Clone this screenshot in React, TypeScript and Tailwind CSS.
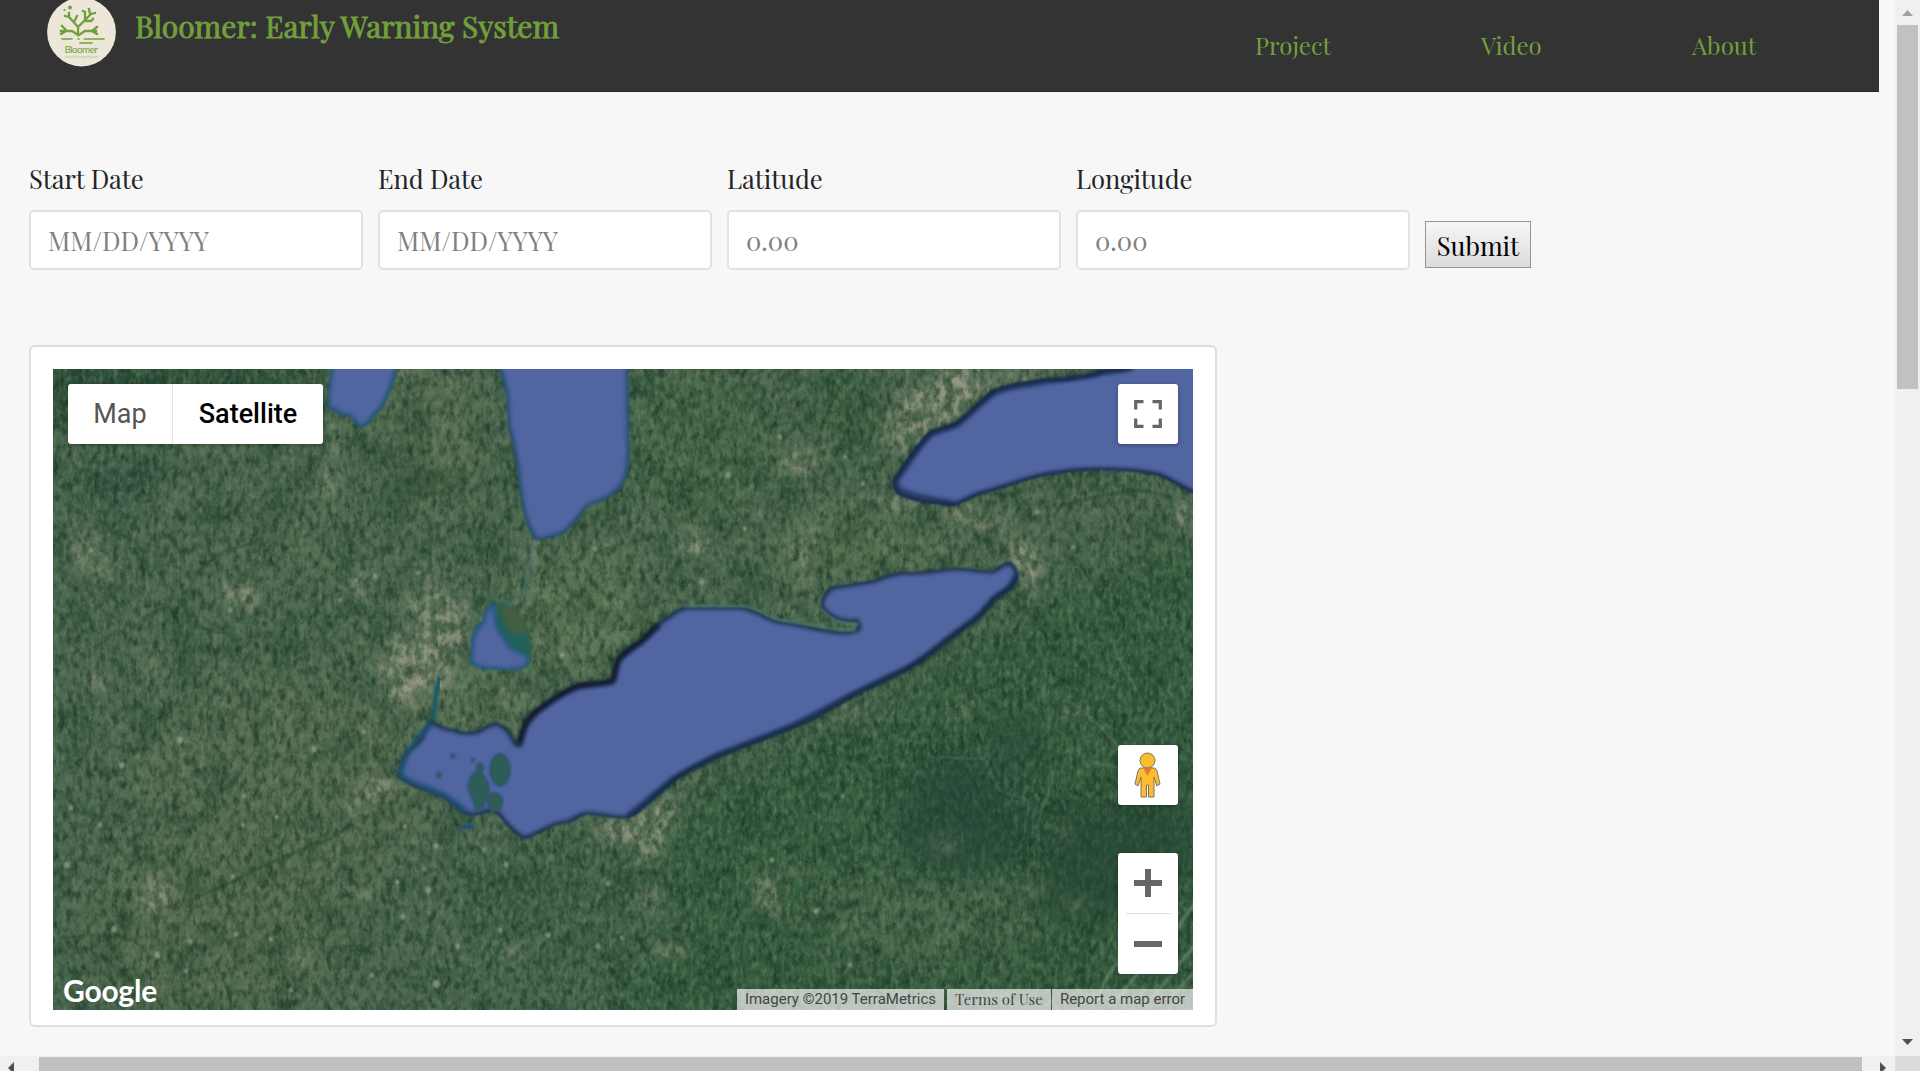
import React from "react";

const SERIF = "font-['Playfair_Display','Liberation_Serif',serif]";

const ERIE =
  "M432 722 C440 727 446 730 453 730 C460 733 466 734 473 733 C482 732 486 724 495 724 C502 725 505 727 508 731 C512 738 515 743 519 747 C521 738 522 730 526 723 C531 716 534 711 542 707 C552 700 567 689 579 685 C590 683 605 683 612 681 C616 676 613 667 620 657 C627 651 631 646 640 642 C648 637 652 627 659 623 C668 619 675 610 684 608 L743 608 C759 610 770 623 785 623 C806 625 825 633 847 633 C853 632 860 629 860 627 L856 620 C849 622 841 620 835 618 C829 615 822 611 822 605 C822 598 826 592 831 588 C844 586 857 584 870 582 C881 579 893 573 904 573 C922 575 940 569 958 569 C970 569 981 572 992 572 C998 569 1004 563 1010 563 C1015 567 1017 570 1017 575 C1017 580 1014 585 1011 588 C1004 592 997 595 992 600 C988 606 984 612 979 617 C966 626 951 636 938 647 C926 657 914 666 900 673 C884 680 869 688 854 695 C834 706 815 720 793 727 C766 738 742 747 716 757 C700 764 686 771 674 780 C662 790 651 801 640 810 C636 813 633 816 628 817 C615 818 600 814 587 813 C578 815 574 820 567 822 C552 822 538 835 524 838 C518 835 511 829 506 823 C500 816 498 811 492 809 C484 813 472 816 465 813 C455 806 447 797 436 793 C423 789 410 785 400 777 C399 769 402 760 406 753 C411 746 418 744 422 737 C424 731 427 724 432 722 Z";
const ONTARIO =
  "M1210 350 L1150 355 L1130 368 C1118 370 1108 370 1099 372 C1090 378 1080 376 1072 378 C1063 381 1052 379 1042 380 C1025 384 1006 384 992 392 C980 401 969 413 958 422 C950 428 940 428 931 432 C918 443 905 465 894 480 C893 488 896 492 900 494 C916 502 937 502 954 505 C964 501 974 495 984 492 C1010 486 1034 474 1061 472 C1088 467 1132 469 1157 474 C1172 479 1182 490 1210 498 Z";
const HURON =
  "M490 350 C501 370 504 379 506 390 C510 402 507 417 510 430 C515 444 516 459 519 473 C520 486 521 498 524 510 C526 522 531 530 535 539 C544 538 554 537 563 533 C569 528 574 522 579 517 C582 512 585 507 589 505 C595 501 602 501 608 497 C616 493 621 487 624 480 C629 466 629 453 628 440 L627 350 Z";
const SAGINAW =
  "M334 350 C331 380 327 395 329 408 L336 410 L341 415 L347 414 C353 417 357 425 361 428 C369 424 374 414 381 408 C387 399 390 388 393 381 L400 350 Z";
const ST_CLAIR =
  "M493 603 C487 607 484 612 484 620 C482 627 473 629 473 638 L471 661 C475 669 488 668 500 669 C510 669 520 670 526 666 C531 661 529 655 522 653 C513 650 507 645 504 637 C499 632 496 627 496 619 Z";

const lakes: [string, string][] = [
  [ERIE, "#152d45"],
  [ONTARIO, "#0f2340"],
  [HURON, "#204d68"],
  [SAGINAW, "#22546c"],
  [ST_CLAIR, "#1f5a78"],
];

// cx, cy, rx, ry, strength
const cities: number[][] = [
  [87, 555, 16, 22, 0.7], [102, 575, 12, 14, 0.6], [240, 596, 22, 15, 0.8], [360, 585, 10, 20, 0.6],
  [418, 605, 22, 14, 0.6], [415, 665, 36, 34, 0.9], [450, 625, 22, 34, 0.7], [405, 690, 20, 22, 0.7],
  [326, 483, 14, 18, 0.7], [333, 451, 12, 8, 0.7], [175, 500, 16, 18, 0.4], [150, 670, 10, 8, 0.7],
  [98, 680, 14, 14, 0.7], [930, 405, 34, 24, 0.9], [957, 385, 26, 24, 1], [905, 430, 22, 26, 0.8],
  [1010, 378, 34, 7, 0.8], [893, 503, 24, 8, 1], [800, 463, 20, 15, 0.8], [828, 442, 10, 9, 0.7],
  [695, 544, 14, 15, 0.9], [764, 519, 7, 6, 0.9], [829, 513, 10, 8, 0.6], [805, 555, 14, 34, 0.6],
  [1025, 558, 14, 22, 1], [1033, 578, 8, 16, 0.8], [990, 523, 30, 7, 0.8], [1183, 515, 10, 12, 0.9],
  [960, 512, 22, 7, 0.8], [378, 788, 15, 15, 1], [352, 805, 14, 12, 0.7], [157, 893, 14, 20, 0.9],
  [150, 905, 12, 10, 0.7], [365, 899, 8, 9, 0.7], [300, 958, 12, 9, 0.8], [515, 950, 14, 10, 0.6],
  [628, 830, 34, 13, 1], [655, 822, 16, 22, 1], [650, 850, 14, 18, 0.7], [650, 900, 12, 12, 0.8],
  [670, 950, 18, 9, 0.8], [765, 890, 14, 20, 0.7], [773, 905, 8, 14, 0.8], [795, 870, 8, 8, 0.7],
  [848, 713, 12, 7, 1], [965, 710, 10, 5, 0.8], [1072, 712, 16, 5, 0.8], [945, 842, 18, 12, 0.4],
  [1062, 832, 8, 8, 0.7], [1035, 887, 8, 6, 0.7], [1075, 905, 12, 8, 0.5], [535, 552, 10, 13, 0.9],
  [498, 833, 12, 8, 0.7], [690, 777, 30, 6, 0.5], [760, 750, 16, 5, 0.7], [660, 808, 22, 10, 0.8],
  [330, 430, 12, 12, 0.4], [200, 440, 24, 14, 0.3], [438, 640, 20, 60, 0.5], [380, 660, 24, 8, 0.5],
  [420, 570, 14, 12, 0.5], [560, 650, 10, 6, 0.5],
];

const rivers = [
  "M190 590 C194 572 205 563 224 552 L256 542",
  "M190 620 C205 633 220 632 240 636",
  "M55 960 C72 972 85 982 92 996",
  "M60 938 C92 936 110 930 138 943",
  "M190 900 C230 885 250 870 290 855 C310 845 330 842 350 825",
  "M262 858 C270 880 280 888 290 895",
  "M540 550 C524 575 522 590 521 610",
  "M505 470 C512 520 505 570 512 600",
  "M1060 505 C1100 500 1130 480 1170 498",
];

const brooks = [
  "M1065 700 C1090 712 1102 730 1118 745 L1132 772", "M940 757 L984 759 C990 745 976 735 982 725",
  "M984 759 C992 772 994 785 1002 792 L1030 800", "M1048 690 C1052 725 1046 740 1050 760 L1048 800",
  "M1110 640 C1128 680 1146 700 1148 720", "M1040 650 C1052 680 1040 690 1046 705",
  "M1170 610 C1178 640 1188 660 1190 690", "M820 950 C832 975 828 985 836 1010",
  "M1036 838 C1038 815 1044 800 1050 790", "M1092 762 L1120 768", "M890 960 C900 980 894 995 905 1010",
];

const townDots: number[][] = [
  [230, 610, 3], [375, 576, 3], [356, 580, 2.5], [418, 573, 3], [340, 600, 2.5], [562, 655, 3.5], [595, 549, 3],
  [607, 545, 2.5], [71, 808, 3], [67, 865, 4], [100, 825, 3], [243, 825, 3], [244, 796, 2.5], [277, 817, 3],
  [405, 826, 3], [436, 846, 3.5], [424, 869, 2.5], [484, 849, 2.5], [506, 865, 3], [397, 882, 3], [428, 890, 4],
  [403, 917, 3.5], [190, 941, 3], [236, 934, 3.5], [271, 939, 3], [372, 975, 3], [291, 990, 3], [436, 984, 5],
  [186, 971, 3], [157, 955, 4], [114, 929, 4], [500, 930, 3], [548, 935, 3.5], [598, 946, 3], [458, 946, 3.5],
  [622, 938, 3], [608, 884, 3], [180, 740, 4], [314, 749, 3.5], [122, 765, 4], [364, 732, 3], [405, 688, 5],
  [233, 877, 3], [740, 700, 2.5], [745, 529, 3], [863, 484, 3], [845, 457, 2.5], [728, 475, 4], [780, 437, 3],
  [702, 582, 3.5], [1073, 547, 2.5], [1037, 512, 3], [843, 796, 3], [772, 860, 3], [816, 911, 3.5], [850, 965, 3],
];

function MapImage() {
  return (
    <svg className="block h-full w-full" viewBox="53 369 1140 641" preserveAspectRatio="none">
      <defs>
        <filter id="soft30" x="-50%" y="-50%" width="200%" height="200%"><feGaussianBlur stdDeviation="22" /></filter>
        <filter id="soft9" x="-80%" y="-80%" width="260%" height="260%"><feGaussianBlur stdDeviation="9" /></filter>
        <filter id="soft6" x="-80%" y="-80%" width="260%" height="260%"><feGaussianBlur stdDeviation="7" /></filter>
        <filter id="soft2" x="-10%" y="-10%" width="120%" height="120%"><feGaussianBlur stdDeviation="2" /></filter>
        <filter id="soft1" x="-10%" y="-10%" width="120%" height="120%"><feGaussianBlur stdDeviation="0.9" /></filter>
        <filter id="water" x="-5%" y="-5%" width="110%" height="110%">
          <feMorphology operator="erode" radius="2" />
          <feGaussianBlur stdDeviation="1.9" />
        </filter>
        <filter id="darkGrain" x="0" y="0" width="100%" height="100%" colorInterpolationFilters="sRGB">
          <feTurbulence type="fractalNoise" baseFrequency="0.15 0.09" numOctaves="5" seed="7" />
          <feColorMatrix values="0 0 0 0 0.09  0 0 0 0 0.2  0 0 0 0 0.14  2.6 0 0 0 -1.05" />
        </filter>
        <filter id="darkPatch" x="0" y="0" width="100%" height="100%" colorInterpolationFilters="sRGB">
          <feTurbulence type="fractalNoise" baseFrequency="0.03" numOctaves="5" seed="22" />
          <feColorMatrix values="0 0 0 0 0.11  0 0 0 0 0.26  0 0 0 0 0.17  3.6 0 0 0 -1.65" />
        </filter>
        <filter id="lightGrain" x="0" y="0" width="100%" height="100%" colorInterpolationFilters="sRGB">
          <feTurbulence type="fractalNoise" baseFrequency="0.22 0.13" numOctaves="4" seed="41" />
          <feColorMatrix values="0 0 0 0 0.5  0 0 0 0 0.56  0 0 0 0 0.43  0 2 0 0 -0.82" />
        </filter>
        <filter id="cityGrain" x="0" y="0" width="100%" height="100%" colorInterpolationFilters="sRGB">
          <feTurbulence type="fractalNoise" baseFrequency="0.13 0.09" numOctaves="5" seed="5" />
          <feColorMatrix values="0 0 0 0 0.66  0 0 0 0 0.65  0 0 0 0 0.57  0 0 3.2 0 -1.3" />
        </filter>
        <mask id="cityMask" maskUnits="userSpaceOnUse" x="53" y="369" width="1140" height="641">
          <g filter="url(#soft6)">
            {cities.map(([cx, cy, rx, ry, o], i) => (
              <ellipse key={i} cx={cx} cy={cy} rx={rx} ry={ry} fill="#fff" opacity={o} />
            ))}
          </g>
        </mask>
      </defs>

      <rect x="53" y="369" width="1140" height="641" fill="#4b6850" />
      <g filter="url(#soft30)">
        <path d="M600 1040 L640 830 L760 760 L900 690 L1040 600 L1240 520 L1240 1040 Z" fill="#365d40" />
        <path d="M20 350 H300 V390 L90 420 L20 420 Z" fill="#2b5037" />
        <ellipse cx="125" cy="480" rx="50" ry="34" fill="#3a5c48" />
        <ellipse cx="440" cy="430" rx="36" ry="80" fill="#5d7155" />
        <ellipse cx="270" cy="540" rx="90" ry="40" fill="#526c53" />
        <ellipse cx="280" cy="790" rx="150" ry="120" fill="#576d52" />
        <ellipse cx="210" cy="930" rx="130" ry="90" fill="#536b50" />
        <ellipse cx="480" cy="695" rx="60" ry="22" fill="#6a8060" />
        <ellipse cx="580" cy="610" rx="70" ry="55" fill="#5f7859" />
        <ellipse cx="570" cy="910" rx="110" ry="80" fill="#406449" />
        <ellipse cx="700" cy="440" rx="70" ry="80" fill="#466948" />
        <ellipse cx="850" cy="410" rx="30" ry="50" fill="#345b3d" />
        <ellipse cx="970" cy="800" rx="70" ry="62" fill="#2c4f3d" />
        <ellipse cx="1110" cy="850" rx="90" ry="60" fill="#2b5039" />
        <ellipse cx="860" cy="550" rx="90" ry="30" fill="#54714f" />
        <ellipse cx="920" cy="920" rx="120" ry="40" fill="#4a6b4d" />
      </g>
      <rect x="53" y="369" width="1140" height="641" filter="url(#darkPatch)" opacity="0.42" />
      <rect x="53" y="369" width="1140" height="641" filter="url(#darkGrain)" opacity="0.65" />
      <rect x="53" y="369" width="1140" height="641" filter="url(#lightGrain)" opacity="0.5" />
      <g filter="url(#soft9)" opacity="0.5">
        <path d="M925 770 L965 755 L1000 785 L1020 830 L1010 870 L945 880 L900 850 L898 815 Z" fill="#284a39" />
        <path d="M990 715 H1048 V735 L1020 770 L1000 760 Z" fill="#264c38" />
        <path d="M1040 910 L1060 810 L1193 800 V870 L1110 920 L1060 930 Z" fill="#264a36" />
        <path d="M332 815 L348 792 L360 800 L340 830 Z M258 530 L272 500 L285 505 L268 540 Z M380 500 L400 470 L430 455 L425 490 L395 510 Z" fill="#23452f" />
      </g>
      <g fill="none" stroke="#1f4229" strokeWidth="2" opacity="0.6" filter="url(#soft1)">
        {rivers.map((d) => <path key={d} d={d} />)}
      </g>
      <g fill="none" stroke="#76907a" strokeWidth="1.3" opacity="0.5" filter="url(#soft1)">
        {brooks.map((d) => <path key={d} d={d} />)}
      </g>
      <path d="M1098 1000 C1106 970 1120 960 1136 948 M1116 1002 C1140 965 1175 940 1196 900 M1150 1000 C1165 985 1180 960 1196 945 M1168 1000 L1196 970 M1178 925 L1196 902" fill="none" stroke="#7f9a80" strokeWidth="3" opacity="0.5" filter="url(#soft1)" />
      <rect x="53" y="369" width="1140" height="641" fill="#85846f" mask="url(#cityMask)" opacity="0.2" />
      <rect x="53" y="369" width="1140" height="641" filter="url(#cityGrain)" mask="url(#cityMask)" opacity="0.75" />
      <g fill="#a7b09a" opacity="0.65" filter="url(#soft1)">
        {townDots.map(([x, y, r], i) => <ellipse key={i} cx={x} cy={y} rx={r * 0.7} ry={r * 0.8} />)}
      </g>

      <path d="M538 538 C528 565 526 580 522 602" fill="none" stroke="#50736f" strokeWidth="2.5" filter="url(#soft1)" />
      <path d="M497 603 C512 598 518 620 527 632 C534 645 530 656 524 655 C508 650 499 632 495 620 Z" fill="#22615a" filter="url(#soft2)" />
      <path d="M500 606 C512 602 528 618 526 632 C514 640 503 628 500 606 Z" fill="#435f40" filter="url(#soft2)" />
      <path d="M439 677 C438 690 434 698 435 708 L430 728" fill="none" stroke="#1b5a64" strokeWidth="5" filter="url(#soft1)" />

      <g strokeLinejoin="round" filter="url(#soft1)">
        {lakes.map(([d, shore]) => <path key={d} d={d} fill={shore} stroke={shore} strokeWidth="2.5" />)}
      </g>
      {lakes.map(([d]) => <path key={d} d={d} fill="#5165a1" stroke="#5165a1" strokeWidth="1.5" filter="url(#water)" />)}

      <g fill="none" strokeLinejoin="round" filter="url(#soft2)">
        <path d="M519 744 C521 738 522 730 526 723 C534 711 560 692 579 686 C590 684 605 684 612 681 C616 676 613 667 620 657 L640 642 L659 625" stroke="#0a1626" strokeWidth="5" />
        <path d="M1130 368 L1099 373 L1042 382 C1025 386 1006 386 992 394 L958 424 L931 434 C919 445 906 467 896 480 C895 490 900 494 954 503" stroke="#0f2342" strokeWidth="4" opacity="0.8" />
        <path d="M1016 575 C1013 590 997 595 979 616 C951 639 920 664 900 672 L854 694 L793 726 L716 756 L674 779 L628 816" stroke="#102642" strokeWidth="4" />
        <path d="M432 723 C406 745 400 769 401 777 C423 788 440 789 466 812" stroke="#1d5472" strokeWidth="4" />
      </g>
      <path d="M684 606 H743 C759 607 770 620 785 621 L812 625 C825 627 840 631 854 630 L857 624 C842 624 828 619 821 608" fill="none" stroke="#48796f" strokeWidth="2.2" filter="url(#soft1)" />

      <g fill="#2f5c57" stroke="#2d5472" strokeWidth="1.5" filter="url(#soft1)">
        <ellipse cx="500" cy="770" rx="10" ry="16" />
        <path d="M468 787 C468 777 474 771 480 772 C487 777 490 785 489 792 C488 800 484 800 483 808 L476 812 C476 801 469 797 468 787 Z" />
        <ellipse cx="495" cy="802" rx="7.5" ry="9.5" />
        <ellipse cx="480" cy="768" rx="3.5" ry="5" />
        <circle cx="453" cy="756" r="2" />
        <circle cx="473" cy="760" r="1.6" />
        <ellipse cx="439" cy="775" rx="2" ry="3" />
        <path d="M460 826 L474 823 L472 828 L462 829 Z" fill="#1f4f66" />
      </g>
    </svg>
  );
}

function Logo() {
  return (
    <svg className="h-[70px] w-[70px]" viewBox="0 0 70 70">
      <circle cx="35.500" cy="35" r="34.400" fill="#ede7da" />
      <g fill="none" stroke="#719f3b" strokeWidth="2.3" strokeLinecap="square">
        <path d="M32 38 V30 M32 38 L26 34 H15 M20 33 L16 29 M20 34 L15 37 M33 38 L39 34 H50 M46 34 L51 30 M46 34 L51 37 M32 30 L23 20 M23 20 L19 19 M23 20 V16 M28 25 L31 19 M32 30 L45 17 M39 23 L39 15 M45 17 L49 16 M44 17 L43 12 M39 15 L37 14 M40 24 H45 L47 22" />
        <path d="M16 42 H26 M32 42 H33 M38.500 42 H58 M34 46 H46" strokeWidth="1.3" />
      </g>
      <circle cx="24" cy="10.500" r="2" fill="#719f3b" />
      <circle cx="18.500" cy="13" r="1" fill="#719f3b" />
      <text x="18.500" y="56" textLength="33.500" fontSize="10" fill="#719f3b" fontFamily="Lato, sans-serif">Bloomer</text>
      <text x="19" y="61" textLength="33" fontSize="3.800" fill="#b3c592" fontFamily="Lato, sans-serif">Early Warning System</text>
    </svg>
  );
}

function Field({ label, placeholder }: { label: string; placeholder: string }) {
  return (
    <label className="flex w-[334px] flex-col">
      <span className="mt-[-6px] h-[51px] text-[25.6px] leading-[38px] tracking-[-0.05px] text-[#212529]">{label}</span>
      <span className="flex h-[60px] items-center overflow-hidden rounded-[5px] border-2 border-[#e2e2e2] bg-white pl-[17px]">
        <input className="w-[290px] pb-px text-[25.6px] leading-[36px] outline-none placeholder:text-[#808080]" placeholder={placeholder} />
      </span>
    </label>
  );
}

function MapControls() {
  return (
    <>
      <div className="absolute left-[15px] top-[15px] flex h-[60px] w-[255px] items-center overflow-hidden rounded-[3px] bg-white font-[Roboto,sans-serif] text-[27px] shadow-[0_1px_4px_rgba(0,0,0,0.3)]">
        <div className="flex h-full w-[105px] items-center justify-center border-r border-[#e6e6e6] text-[#565656]">Map</div>
        <div className="flex h-full flex-1 items-center justify-center font-medium text-black">Satellite</div>
      </div>
      <div className="absolute right-[15px] top-[15px] flex h-[60px] w-[60px] items-center justify-center rounded-[3px] bg-white shadow-[0_1px_4px_rgba(0,0,0,0.3)]">
        <svg className="h-7 w-7" viewBox="0 0 28 28" fill="none" stroke="#666" strokeWidth="3.2">
          <path d="M1.700 9.500 V1.700 H9.500 M18.500 1.700 H26.300 V9.500 M26.300 18.500 V26.300 H18.500 M9.500 26.300 H1.700 V18.500" />
        </svg>
      </div>
      <div className="absolute right-[15px] top-[376px] flex h-[60px] w-[60px] justify-center rounded-[3px] bg-white pt-[7px] shadow-[0_1px_4px_rgba(0,0,0,0.3)]">
        <svg className="h-[46px] w-[28px]" viewBox="0 0 28 46" fill="#fbbc2d" stroke="#7a7369" strokeWidth="1">
          <path d="M7 16 H20 Q22 16 23 19 L26 32 L23 34 L20 25 V45 H14.500 V33 H12.500 V45 H7 V25 L4 34 L1 32 L4 19 Q5 16 7 16 Z" />
          <path d="M9 15.500 H18 L13.500 24 Z" fill="#e27b32" stroke="none" />
          <circle cx="13.500" cy="8.500" r="7.500" />
        </svg>
      </div>
      <div className="absolute right-[15px] top-[484px] flex h-[121px] w-[60px] flex-col items-center rounded-[3px] bg-white shadow-[0_1px_4px_rgba(0,0,0,0.3)]">
        <div className="flex h-[60px] items-center">
          <svg className="h-7 w-7" viewBox="0 0 28 28" fill="#666"><path d="M0 11 H11 V0 H17 V11 H28 V17 H17 V28 H11 V17 H0 Z" /></svg>
        </div>
        <div className="h-px w-[45px] bg-[#e2e2e2]" />
        <div className="flex h-[60px] items-center">
          <div className="h-1.5 w-7 bg-[#666]" />
        </div>
      </div>
      <div className="absolute bottom-[2px] left-[10px] font-[Lato,sans-serif] text-[30px] font-bold leading-[36px] tracking-[-0.2px] text-white">Google</div>
      <div className="absolute bottom-0 right-0 flex h-[21px] text-[15px] leading-[20px] text-[#444]">
        <div className="mr-[3px] w-[207px] whitespace-nowrap bg-[#f5f5f5]/70 text-center font-[Roboto,sans-serif]">Imagery ©2019 TerraMetrics</div>
        <div className={`mr-px w-[104px] whitespace-nowrap bg-[#f5f5f5]/70 text-center text-[15px] ${SERIF}`}>Terms of Use</div>
        <div className="w-[141px] whitespace-nowrap bg-[#f5f5f5]/70 text-center font-[Roboto,sans-serif]">Report a map error</div>
      </div>
    </>
  );
}

export default function App() {
  return (
    <div className={`flex h-[1071px] w-[1920px] flex-col overflow-hidden bg-[#f7f7f7] ${SERIF}`}>
      <div className="flex h-[1056px]">
        <main className="w-[1895px]">
          <header className="flex h-[92px] w-[1879px] border-b border-[#262626] bg-[#333] text-[#719f3b]">
            <div className="ml-[46px] mt-[-3px] h-[70px] w-[70px]"><Logo /></div>
            <h1 className="ml-[19px] mt-[6px] w-[1120px] whitespace-nowrap text-[30px] leading-[40px] [-webkit-text-stroke:0.9px_#719f3b]">Bloomer: Early Warning System</h1>
            <nav className="mt-[26px] flex text-[24px] leading-[38px]">
              <a className="w-[226px]">Project</a>
              <a className="w-[211px]">Video</a>
              <a>About</a>
            </nav>
          </header>

          <form className="ml-[29px] mt-[73px] flex h-[105px] gap-[15px]">
            <Field label="Start Date" placeholder="MM/DD/YYYY" />
            <Field label="End Date" placeholder="MM/DD/YYYY" />
            <Field label="Latitude" placeholder="0.00" />
            <Field label="Longitude" placeholder="0.00" />
            <button type="button" className="mt-14 h-[47px] w-[106px] border border-[#949494] bg-linear-to-b from-[#f6f6f6] to-[#dcdcdc] pt-0.5 text-[25.6px] leading-[43px] text-black">Submit</button>
          </form>

          <section className="ml-[29px] mt-[75px] h-[682px] w-[1188px] rounded-[6px] border-2 border-[#dedede] bg-white px-[22px] pt-[22px]">
            <div className="relative h-[641px] w-[1140px] overflow-hidden">
              <MapImage />
              <MapControls />
            </div>
          </section>
        </main>

        <div className="flex w-[25px] flex-col items-center bg-[#f0f0f0]">
          <div className="flex h-[25px] items-center">
            <svg className="h-[6px] w-[11px]" viewBox="0 0 11 6"><path d="M0 6 L5.500 0 L11 6 Z" fill="#a0a0a0" /></svg>
          </div>
          <div className="h-[364px] w-[21px] bg-[#c1c1c1]" />
          <div className="mt-auto flex h-[28px] items-center">
            <svg className="h-[6px] w-[11px]" viewBox="0 0 11 6"><path d="M0 0 L5.500 6 L11 0 Z" fill="#505050" /></svg>
          </div>
        </div>
      </div>

      <div className="flex h-[15px] bg-[#f0f0f0]">
        <div className="w-[39px] pl-[8px] pt-[6px]">
          <svg className="h-[12px] w-[6px]" viewBox="0 0 6 12"><path d="M6 0 L0 6 L6 12 Z" fill="#505050" /></svg>
        </div>
        <div className="mt-[1px] w-[1823px] bg-[#c1c1c1]" />
        <div className="w-[33px] pl-[18px] pt-[6px]">
          <svg className="h-[12px] w-[6px]" viewBox="0 0 6 12"><path d="M0 0 L6 6 L0 12 Z" fill="#505050" /></svg>
        </div>
        <div className="w-[25px] bg-[#dcdcdc]" />
      </div>
    </div>
  );
}
